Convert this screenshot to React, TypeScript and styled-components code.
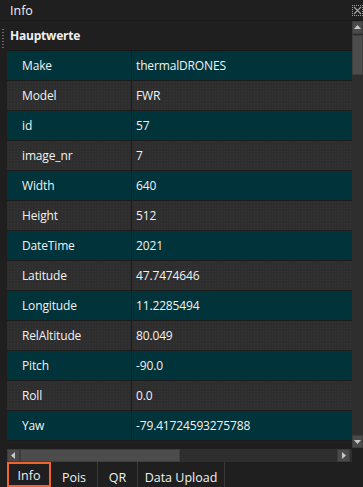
import React from "react";
import styled, { createGlobalStyle } from "styled-components";

const Global = createGlobalStyle`
  html, body { margin: 0; padding: 0; background: #1f1f1f; }
  body { font-family: "Open Sans", "Noto Sans", sans-serif; color: #f0f0f0; }
  * { box-sizing: border-box; }
`;

const Window = styled.div`
  width: 363px;
  height: 487px;
  display: flex;
  flex-direction: column;
  background: #1f1f1f;
  overflow: hidden;
`;

const TitleBar = styled.div`
  height: 21px;
  display: flex;
  align-items: center;
  justify-content: space-between;
  padding-left: 10px;
  font-size: 12.5px;
  border-bottom: 1px solid #191919;
`;

const Close = styled.div`
  width: 11px;
  height: 11px;
  border: 1px dotted #9a9a9a;
  display: flex;
  align-items: center;
  justify-content: center;
`;

const Body = styled.div`
  flex: 1;
  display: flex;
  min-height: 0;
`;

const Main = styled.div`
  flex: 1;
  display: flex;
  flex-direction: column;
  min-width: 0;
`;

const SectionHead = styled.div`
  height: 29px;
  display: flex;
  align-items: center;
  position: relative;
  padding-left: 10px;
  font-weight: 700;
  font-size: 12px;
  letter-spacing: -0.2px;
`;

const Grip = styled.div`
  position: absolute;
  left: 2px;
  top: 8px;
  width: 2px;
  height: 20px;
  background-image: linear-gradient(#6a6a6a 50%, transparent 50%);
  background-size: 2px 3px;
`;

const Table = styled.div`
  margin-left: 7px;
  display: flex;
  flex-direction: column;
  flex: 1;
  min-height: 0;
  border-top: 1px solid #181818;
`;

const Row = styled.div<{ $teal: boolean }>`
  height: 30px;
  flex-shrink: 0;
  display: grid;
  grid-template-columns: 125px 1fr;
  border-bottom: 1px solid #1c1c1c;
  background-color: ${(p) => (p.$teal ? "#00343a" : "#2e2e2e")};
  ${(p) =>
    p.$teal
      ? ""
      : `background-image: radial-gradient(#363636 0.6px, transparent 0.7px); background-size: 3px 3px;`}
  font-size: 12px;
  letter-spacing: -0.15px;
`;

const Cell = styled.div<{ $first?: boolean }>`
  display: flex;
  align-items: center;
  padding-left: ${(p) => (p.$first ? "15px" : "4px")};
  border-right: ${(p) => (p.$first ? "1px solid #1c1c1c" : "none")};
  white-space: nowrap;
  overflow: hidden;
  color: #f2f2f2;
`;

const Filler = styled.div`
  flex: 1;
`;

const HScroll = styled.div`
  height: 13px;
  margin-left: 7px;
  display: flex;
  background: #2e2e2e;
  padding-right: 2px;
`;

const ArrowBtn = styled.div<{ $w?: number }>`
  width: ${(p) => p.$w ?? 13}px;
  height: 13px;
  flex-shrink: 0;
  background: #4a4a4a;
  border: 1px solid #3c3c3c;
  display: flex;
  align-items: center;
  justify-content: center;
`;

const HThumb = styled.div`
  width: 160px;
  background: #4c4c4c;
  border: 1px solid #3e3e3e;
`;

const VScroll = styled.div`
  width: 11px;
  display: flex;
  flex-direction: column;
  background: #2e2e2e;
  margin-bottom: 14px;
`;

const VThumb = styled.div`
  height: 40px;
  background: #4c4c4c;
  border: 1px solid #3e3e3e;
  margin-top: 1px;
`;

const Tabs = styled.div`
  height: 25px;
  display: flex;
  padding-left: 7px;
`;

const Tab = styled.div<{ $active?: boolean; $w: number }>`
  width: ${(p) => p.$w}px;
  display: flex;
  align-items: flex-end;
  justify-content: center;
  padding-bottom: 1px;
  font-size: 12.5px;
  color: #f0f0f0;
  border: ${(p) => (p.$active ? "2px solid #f2642a" : "none")};
  border-right: ${(p) => (p.$active ? "2px solid #f2642a" : "1px solid #3a3a3a")};
`;

const rows: [string, string][] = [
  ["Make", "thermalDRONES"],
  ["Model", "FWR"],
  ["id", "57"],
  ["image_nr", "7"],
  ["Width", "640"],
  ["Height", "512"],
  ["DateTime", "2021"],
  ["Latitude", "47.7474646"],
  ["Longitude", "11.2285494"],
  ["RelAltitude", "80.049"],
  ["Pitch", "-90.0"],
  ["Roll", "0.0"],
  ["Yaw", "-79.41724593275788"],
];

export default function App() {
  return (
    <Window>
      <Global />
      <TitleBar>
        <span>Info</span>
        <Close>
          <svg width="9" height="9" viewBox="0 0 9 9">
            <path d="M1 1L8 8M8 1L1 8" stroke="#a0a0a0" strokeWidth="1.2" />
          </svg>
        </Close>
      </TitleBar>
      <Body>
        <Main>
          <SectionHead>
            <Grip />
            Hauptwerte
          </SectionHead>
          <Table>
            {rows.map(([k, v], i) => (
              <Row key={k} $teal={i % 2 === 0}>
                <Cell $first>{k}</Cell>
                <Cell>{v}</Cell>
              </Row>
            ))}
            <Filler />
          </Table>
          <HScroll>
            <ArrowBtn>
              <svg width="5" height="7" viewBox="0 0 5 7">
                <path d="M4 0L0 3.5L4 7Z" fill="#c8c8c8" />
              </svg>
            </ArrowBtn>
            <HThumb />
            <Filler />
            <ArrowBtn>
              <svg width="5" height="7" viewBox="0 0 5 7">
                <path d="M1 0L5 3.5L1 7Z" fill="#c8c8c8" />
              </svg>
            </ArrowBtn>
          </HScroll>
        </Main>
        <VScroll>
          <ArrowBtn $w={11}>
            <svg width="7" height="5" viewBox="0 0 7 5">
              <path d="M0 4L3.5 0L7 4Z" fill="#c8c8c8" />
            </svg>
          </ArrowBtn>
          <VThumb />
          <Filler />
          <ArrowBtn $w={11}>
            <svg width="7" height="5" viewBox="0 0 7 5">
              <path d="M0 1L3.5 5L7 1Z" fill="#c8c8c8" />
            </svg>
          </ArrowBtn>
        </VScroll>
      </Body>
      <Tabs>
        <Tab $active $w={44}>Info</Tab>
        <Tab $w={47}>Pois</Tab>
        <Tab $w={40}>QR</Tab>
        <Tab $w={87}>Data Upload</Tab>
      </Tabs>
    </Window>
  );
}
